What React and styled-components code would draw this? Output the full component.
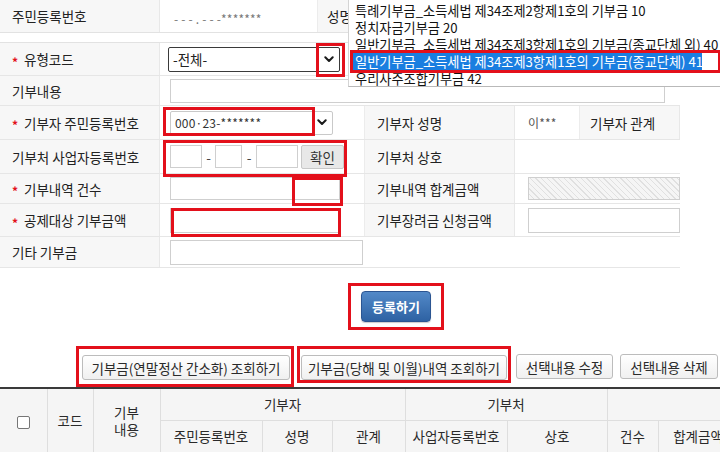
import React from 'react';
import styled, { createGlobalStyle } from 'styled-components';

const RED = '#e3101b';

const Global = createGlobalStyle`
  html, body { margin: 0; padding: 0; background: #fff; }
  body {
    font-family: "Noto Sans CJK KR", "Noto Sans", sans-serif;
    font-size: 13.5px; color: #2a2a2a;
    width: 720px; height: 452px; overflow: hidden;
  }
  * { box-sizing: border-box; }
`;

const Page = styled.div`
  position: relative;
  width: 720px;
  height: 452px;
  overflow: hidden;
`;

/* ---------- top info row ---------- */
const TopRow = styled.div`
  display: grid;
  grid-template-columns: 160px 158px 1fr;
  height: 33px;
  border-bottom: 1px solid #e2e2e2;
`;

/* ---------- form table ---------- */
const FormTable = styled.div`
  width: 680px;
  margin-top: 9px;
  border-top: 1px solid #e2e2e2;
`;

const FormRow = styled.div`
  display: grid;
  grid-template-columns: 160px 205px 150px 65px 100px;
  height: ${p => p.$h}px;
  border-bottom: 1px solid #e6e6e6;
`;

const Head = styled.div`
  grid-column: span ${p => p.$span || 1};
  display: flex;
  align-items: center;
  padding-left: ${p => p.$pl ?? 12}px;
  background: #f7f7f7;
  color: #222;
  border-right: 1px solid #e8e8e8;
  white-space: nowrap;
`;

const Val = styled.div`
  grid-column: span ${p => p.$span || 1};
  position: relative;
  display: flex;
  align-items: center;
  padding-left: ${p => p.$pl ?? 10}px;
  padding-top: ${p => p.$pt || 0}px;
  border-right: ${p => (p.$last ? 'none' : '1px solid #ececec')};
  white-space: nowrap;
`;

const Star = styled.span`
  display: inline-block;
  width: 12px;
  color: ${RED};
  font-size: 12px;
  font-weight: bold;
  transform: translateY(2px);
`;

const Masked = styled.span`
  font-size: ${p => p.$fs || 11.5}px;
  color: ${p => p.$c || '#555'};
  letter-spacing: 0.2px;
`;

const Field = styled.input`
  flex: none;
  width: ${p => p.$w}px;
  height: ${p => p.$h || 24}px;
  margin: 0;
  padding: 0 4px;
  border: 1px solid #cfcfcf;
  background: ${p =>
    p.$hatch
      ? 'repeating-linear-gradient(45deg, #f5f5f5 0 3px, #e0e0e0 3px 4px)'
      : '#fff'};
  font: inherit;
  outline: none;
`;

const SelectBox = styled.div`
  flex: none;
  display: flex;
  align-items: center;
  justify-content: space-between;
  width: ${p => p.$w}px;
  height: ${p => p.$h || 24}px;
  padding: 0 5px 0 4px;
  border: 1px solid ${p => (p.$dark ? '#3a3a3a' : '#c9c9c9')};
  border-radius: 2px;
  background: #fff;
  color: #222;
`;

const Dash = styled.span`
  flex: none;
  width: ${p => p.$w}px;
  text-align: center;
  color: #444;
`;

const ConfirmBtn = styled.span`
  flex: none;
  display: flex;
  align-items: center;
  justify-content: center;
  width: 43px;
  height: 24px;
  margin-left: 3px;
  border: 1px solid #c8c8c8;
  border-radius: 2px;
  background: #e8e8e8;
  color: #333;
`;

const Mark = styled.span`
  position: absolute;
  left: ${p => p.$x}px;
  top: ${p => p.$y}px;
  width: ${p => p.$w}px;
  height: ${p => p.$h}px;
  border: 3px solid ${RED};
  pointer-events: none;
  z-index: 2;
`;

const Chevron = () => (
  <svg width="10" height="7" viewBox="0 0 10 7">
    <path d="M1.3 1.3 L5 5 L8.7 1.3" fill="none" stroke="#1a1a1a" strokeWidth="2" strokeLinecap="round" strokeLinejoin="round" />
  </svg>
);

/* ---------- action area ---------- */
const ActionBar = styled.div`
  display: flex;
  padding: 15px 0 0 348px;
`;

const Highlight = styled.div`
  flex: none;
  display: flex;
  align-items: flex-start;
  border: 3px solid ${RED};
  padding: ${p => p.$pad};
  margin-left: ${p => p.$ml || 0}px;
  align-self: flex-start;
`;

const PrimaryBtn = styled.span`
  display: flex;
  align-items: center;
  justify-content: center;
  width: 70px;
  height: 31px;
  border: 1px solid #2b5592;
  border-radius: 4px;
  background: linear-gradient(#5289c8, #2e62a3);
  color: #fff;
  font-weight: bold;
  font-size: 13px;
  box-shadow: 0 1px 1px rgba(0, 0, 0, 0.2);
`;

const ButtonBar = styled.div`
  display: flex;
  align-items: center;
  height: 41px;
  margin-top: 16px;
  padding-left: 76px;
`;

const Btn = styled.span`
  flex: none;
  display: flex;
  align-items: center;
  justify-content: center;
  width: ${p => p.$w}px;
  height: 25px;
  margin-left: ${p => p.$ml || 0}px;
  border: 1px solid #bcbcbc;
  border-radius: 3px;
  background: linear-gradient(#ffffff, #f0f0f0);
  color: #2a2a2a;
  white-space: nowrap;
`;

/* ---------- list table ---------- */
const ListTable = styled.table`
  width: 738px;
  table-layout: fixed;
  border-collapse: collapse;
  border-top: 2px solid #3a3a3a;
`;

const Tr = styled.tr`
  height: ${p => p.$h}px;
`;

const Th = styled.th`
  padding: 0;
  background: #f5f5f5;
  border: 1px solid #dedede;
  border-left: ${p => (p.$first ? 'none' : '1px solid #dedede')};
  font-weight: normal;
  font-size: 13.5px;
  line-height: 17px;
  color: #2a2a2a;
  text-align: center;
  white-space: nowrap;
`;

const Check = styled.span`
  display: inline-block;
  width: 13px;
  height: 13px;
  border: 1px solid #767676;
  border-radius: 2px;
  background: #fff;
  vertical-align: middle;
`;

/* ---------- open select popup ---------- */
const Popup = styled.div`
  position: absolute;
  top: 0;
  left: 348px;
  width: 372px;
  height: 87px;
  padding-top: 2px;
  background: #fff;
  border-left: 1px solid #d4d4d4;
  border-bottom: 1px solid #b9b9b9;
  z-index: 5;
`;

const Option = styled.div`
  width: 349px;
  height: 17px;
  margin-left: 4px;
  padding-left: 2px;
  line-height: 17px;
  font-size: 13.2px;
  white-space: nowrap;
  color: ${p => (p.$on ? '#fff' : '#111')};
  background: ${p => (p.$on ? '#1a7ee0' : 'transparent')};
`;

const options = [
  '특례기부금_소득세법 제34조제2항제1호의 기부금 10',
  '정치자금기부금 20',
  '일반기부금_소득세법 제34조제3항제1호의 기부금(종교단체 외) 40',
  '일반기부금_소득세법 제34조제3항제1호의 기부금(종교단체) 41',
  '우리사주조합기부금 42',
];

export default function App() {
  return (
    <Page>
      <Global />

      <TopRow>
        <Head>주민등록번호</Head>
        <Val $pl={14} $pt={5}>
          <Masked $c="#777" $fs={12}>- - - . - - -*******</Masked>
        </Val>
        <Head $pl={9}>성명</Head>
      </TopRow>

      <FormTable>
        <FormRow $h={33}>
          <Head><Star>*</Star>유형코드</Head>
          <Val $span={4} $pl={8} $last>
            <SelectBox $w={172} $h={25} $dark>
              <span>-전체-</span>
              <Chevron />
            </SelectBox>
            <Mark $x={156} $y={0} $w={29} $h={34} />
          </Val>
        </FormRow>

        <FormRow $h={30}>
          <Head>기부내용</Head>
          <Val $span={4} $last>
            <Field $w={495} readOnly />
          </Val>
        </FormRow>

        <FormRow $h={34}>
          <Head><Star>*</Star>기부자 주민등록번호</Head>
          <Val>
            <SelectBox $w={163}>
              <Masked $c="#333" $fs={12}>000·23-*******</Masked>
              <Chevron />
            </SelectBox>
            <Mark $x={3} $y={1} $w={152} $h={29} />
          </Val>
          <Head>기부자 성명</Head>
          <Val $pl={13}>
            <Masked $c="#555" $fs={12}>이***</Masked>
          </Val>
          <Head $pl={10}>기부자 관계</Head>
        </FormRow>

        <FormRow $h={34}>
          <Head>기부처 사업자등록번호</Head>
          <Val>
            <Field $w={32} $h={23} readOnly />
            <Dash $w={13}>-</Dash>
            <Field $w={27} $h={23} readOnly />
            <Dash $w={14}>-</Dash>
            <Field $w={42} $h={23} readOnly />
            <ConfirmBtn>확인</ConfirmBtn>
            <Mark $x={3} $y={0} $w={184} $h={37} />
          </Val>
          <Head>기부처 상호</Head>
          <Val $span={2} $last />
        </FormRow>

        <FormRow $h={30}>
          <Head><Star>*</Star>기부내역 건수</Head>
          <Val>
            <Field $w={170} $h={23} readOnly />
            <Mark $x={132} $y={3} $w={51} $h={29} />
          </Val>
          <Head>기부내역 합계금액</Head>
          <Val $span={2} $pl={13} $last>
            <Field $w={152} $h={23} $hatch readOnly />
          </Val>
        </FormRow>

        <FormRow $h={33}>
          <Head><Star>*</Star>공제대상 기부금액</Head>
          <Val>
            <Field $w={170} $h={25} readOnly />
            <Mark $x={11} $y={4} $w={170} $h={29} />
          </Val>
          <Head>기부장려금 신청금액</Head>
          <Val $span={2} $pl={13} $last>
            <Field $w={152} $h={25} readOnly />
          </Val>
        </FormRow>

        <FormRow $h={31}>
          <Head>기타 기부금</Head>
          <Val $span={4} $last>
            <Field $w={193} $h={25} readOnly />
          </Val>
        </FormRow>
      </FormTable>

      <ActionBar>
        <Highlight $pad="5px 10px">
          <PrimaryBtn>등록하기</PrimaryBtn>
        </Highlight>
      </ActionBar>

      <ButtonBar>
        <Highlight $pad="6px 1px 4px 3px">
          <Btn $w={208}>기부금(연말정산 간소화) 조회하기</Btn>
        </Highlight>
        <Highlight $pad="6px 1px 0 1px" $ml={3}>
          <Btn $w={206}>기부금(당해 및 이월)내역 조회하기</Btn>
        </Highlight>
        <Btn $w={97} $ml={5}>선택내용 수정</Btn>
        <Btn $w={98} $ml={7}>선택내용 삭제</Btn>
      </ButtonBar>

      <ListTable>
        <colgroup>
          <col style={{ width: 47 }} />
          <col style={{ width: 46 }} />
          <col style={{ width: 67 }} />
          <col style={{ width: 102 }} />
          <col style={{ width: 70 }} />
          <col style={{ width: 73 }} />
          <col style={{ width: 102 }} />
          <col style={{ width: 100 }} />
          <col style={{ width: 51 }} />
          <col style={{ width: 80 }} />
        </colgroup>
        <thead>
          <Tr $h={32}>
            <Th rowSpan={2} $first><Check /></Th>
            <Th rowSpan={2}>코드</Th>
            <Th rowSpan={2}>기부<br />내용</Th>
            <Th colSpan={3}>기부자</Th>
            <Th colSpan={2}>기부처</Th>
            <Th colSpan={2}></Th>
          </Tr>
          <Tr $h={33}>
            <Th>주민등록번호</Th>
            <Th>성명</Th>
            <Th>관계</Th>
            <Th>사업자등록번호</Th>
            <Th>상호</Th>
            <Th>건수</Th>
            <Th>합계금액</Th>
          </Tr>
        </thead>
      </ListTable>

      <Popup>
        {options.map((o, i) => (
          <Option key={i} $on={i === 3}>{o}</Option>
        ))}
        <Mark $x={1} $y={50} $w={371} $h={23} />
      </Popup>
    </Page>
  );
}
